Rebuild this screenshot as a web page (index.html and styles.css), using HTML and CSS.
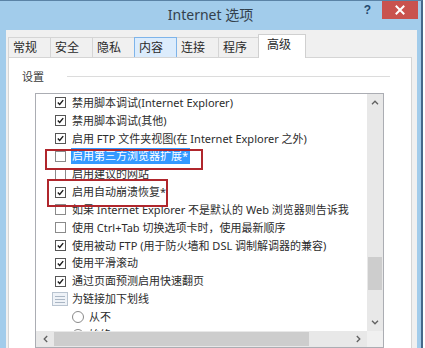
FILE: index.html
```html
<!DOCTYPE html>
<html lang="zh-CN">
<head>
<meta charset="utf-8">
<title>Internet 选项</title>
<link rel="stylesheet" href="styles.css">
</head>
<body>
<div class="window">
  <div class="titlebar">
    <div class="title">Internet 选项</div>
    <div class="controls">
      <span class="help">?</span>
      <span class="close">
        <svg width="10" height="10" viewBox="0 0 10 10"><path d="M1.5 1.5 L8.5 8.5 M8.5 1.5 L1.5 8.5" stroke="#fff" stroke-width="2" stroke-linecap="square"/></svg>
      </span>
    </div>
  </div>
  <div class="body">
    <div class="tabs">
      <div class="tab">常规</div>
      <div class="tab">安全</div>
      <div class="tab">隐私</div>
      <div class="tab hover">内容</div>
      <div class="tab">连接</div>
      <div class="tab">程序</div>
      <div class="tab selected">高级</div>
    </div>
    <div class="panel">
      <div class="group-label"><span>设置</span><div class="rule"></div></div>
      <div class="listbox">
        <div class="list-content">
          <div class="row"><span class="cb on"><svg viewBox="0 0 11 11"><path d="M2.2 5.6 L4.5 8 L8.8 2.6"/></svg></span><span class="txt">禁用脚本调试(Internet Explorer)</span></div>
          <div class="row"><span class="cb on"><svg viewBox="0 0 11 11"><path d="M2.2 5.6 L4.5 8 L8.8 2.6"/></svg></span><span class="txt">禁用脚本调试(其他)</span></div>
          <div class="row"><span class="cb on"><svg viewBox="0 0 11 11"><path d="M2.2 5.6 L4.5 8 L8.8 2.6"/></svg></span><span class="txt">启用 FTP 文件夹视图(在 Internet Explorer 之外)</span></div>
          <div class="row"><span class="cb"></span><span class="txt sel">启用第三方浏览器扩展*</span></div>
          <div class="row"><span class="cb"></span><span class="txt">启用建议的网站</span></div>
          <div class="row"><span class="cb on"><svg viewBox="0 0 11 11"><path d="M2.2 5.6 L4.5 8 L8.8 2.6"/></svg></span><span class="txt">启用自动崩溃恢复*</span></div>
          <div class="row"><span class="cb"></span><span class="txt">如果 Internet Explorer 不是默认的 Web 浏览器则告诉我</span></div>
          <div class="row"><span class="cb"></span><span class="txt">使用 Ctrl+Tab 切换选项卡时，使用最新顺序</span></div>
          <div class="row"><span class="cb on"><svg viewBox="0 0 11 11"><path d="M2.2 5.6 L4.5 8 L8.8 2.6"/></svg></span><span class="txt">使用被动 FTP (用于防火墙和 DSL 调制解调器的兼容)</span></div>
          <div class="row"><span class="cb on"><svg viewBox="0 0 11 11"><path d="M2.2 5.6 L4.5 8 L8.8 2.6"/></svg></span><span class="txt">使用平滑滚动</span></div>
          <div class="row"><span class="cb on"><svg viewBox="0 0 11 11"><path d="M2.2 5.6 L4.5 8 L8.8 2.6"/></svg></span><span class="txt">通过页面预测启用快速翻页</span></div>
          <div class="row grp"><span class="gicon"><svg width="16" height="14" viewBox="0 0 16 14"><rect x="0.5" y="0.5" width="15" height="13" fill="#eef2f7" stroke="#b9c4d0"/><path d="M3 4.5 H13 M3 7.5 H13 M3 10.5 H13" stroke="#aab6c4"/></svg></span><span class="txt">为链接加下划线</span></div>
          <div class="row radio-row"><span class="radio"></span><span class="txt">从不</span></div>
          <div class="row radio-row"><span class="radio"></span><span class="txt">始终</span></div>
          <div class="mark mark1"></div>
          <div class="mark mark2"></div>
        </div>
        <div class="vscroll">
          <div class="sbtn"><svg width="8" height="5" viewBox="0 0 8 5"><path d="M1 4.2 L4 1.2 L7 4.2" fill="none" stroke="#606060" stroke-width="1.3"/></svg></div>
          <div class="vtrack"><div class="vthumb"></div></div>
          <div class="sbtn"><svg width="8" height="5" viewBox="0 0 8 5"><path d="M1 0.8 L4 3.8 L7 0.8" fill="none" stroke="#606060" stroke-width="1.3"/></svg></div>
        </div>
        <div class="hscroll">
          <div class="sbtn"><svg width="5" height="8" viewBox="0 0 5 8"><path d="M4.2 1 L1.2 4 L4.2 7" fill="none" stroke="#606060" stroke-width="1.3"/></svg></div>
          <div class="htrack"><div class="hthumb"></div></div>
          <div class="sbtn"><svg width="5" height="8" viewBox="0 0 5 8"><path d="M0.8 1 L3.8 4 L0.8 7" fill="none" stroke="#606060" stroke-width="1.3"/></svg></div>
        </div>
        <div class="corner"></div>
      </div>
    </div>
  </div>
</div>
</body>
</html>
```
FILE: styles.css
```css
html, body {
  margin: 0;
  padding: 0;
}
body {
  width: 425px;
  height: 348px;
  overflow: hidden;
  background: #ffffff;
  font-family: "Noto Sans", "Noto Sans CJK SC", sans-serif;
  font-size: 11px;
  color: #2c2c2c;
}
.window {
  width: 423px;
  height: 348px;
  box-sizing: border-box;
  background: #a2cceb;
  border-right: 2px solid #47698a;
  border-top: 1px solid #5b83a6;
  display: flex;
  flex-direction: column;
}
.titlebar {
  height: 29px;
  display: grid;
  grid-template-columns: 1fr auto 1fr;
  align-items: start;
}
.title {
  grid-column: 2;
  font-size: 14px;
  line-height: 28px;
  color: #34404c;
}
.controls {
  grid-column: 3;
  justify-self: end;
  display: flex;
  align-items: flex-start;
}
.help {
  font-weight: bold;
  font-size: 12px;
  color: #24496e;
  line-height: 18px;
  margin-right: 11px;
  font-family: "Liberation Sans", sans-serif;
}
.close {
  width: 36px;
  height: 18px;
  background: #c9524e;
  display: flex;
  align-items: center;
  justify-content: center;
  margin-right: 3px;
}
.body {
  flex: 1;
  min-height: 0;
  margin: 0 4px 0 6px;
  background: #f0f0f0;
  padding: 4px 5px 0 2px;
  display: flex;
  flex-direction: column;
  overflow: hidden;
}
.tabs {
  height: 23px;
  display: flex;
  align-items: flex-end;
}
.tab {
  width: 43px;
  height: 20px;
  box-sizing: border-box;
  border: 1px solid #d5d5d5;
  border-bottom: none;
  background: #f0f0f0;
  margin-right: -1px;
  padding-left: 4px;
  font-size: 12px;
  line-height: 19px;
  color: #2a2a2a;
}
.tab.hover {
  background: #dcecfc;
  border-color: #7eb4ea;
  position: relative;
  z-index: 1;
}
.tab.selected {
  width: 48px;
  height: 24px;
  margin-left: -2px;
  margin-bottom: -1px;
  background: #ffffff;
  border-color: #d0d0d0;
  padding-left: 8px;
  line-height: 20px;
  position: relative;
  z-index: 2;
}
.panel {
  flex: 1;
  background: #ffffff;
  border: 1px solid #d5d5d5;
  padding: 0 21px 0 13px;
}
.group-label {
  margin-top: 10px;
  height: 16px;
  display: flex;
  align-items: center;
  color: #3a3a3a;
}
.rule {
  flex: 1;
  height: 1px;
  background: #dcdcdc;
  margin-left: 23px;
}
.listbox {
  margin-top: 9px;
  margin-left: 13px;
  width: 349px;
  height: 255px;
  box-sizing: border-box;
  border: 1px solid #abadb3;
  display: grid;
  grid-template-columns: 1fr 16px;
  grid-template-rows: 1fr 16px;
}
.list-content {
  position: relative;
  overflow: hidden;
  min-height: 0;
}
.row {
  height: 17.83px;
  display: flex;
  align-items: center;
  padding-left: 19px;
  white-space: nowrap;
}
.cb {
  width: 11px;
  height: 11px;
  box-sizing: border-box;
  border: 1px solid #8a8a8a;
  background: #fff;
  margin-right: 6px;
  flex: none;
  display: flex;
}
.cb.on {
  border-color: #555555;
}
.cb svg {
  width: 9px;
  height: 9px;
}
.cb svg path {
  fill: none;
  stroke: #1a1a1a;
  stroke-width: 1.7;
}
.txt {
  line-height: 16px;
}
.txt.sel {
  background: #3399ff;
  color: #fff;
  padding: 0 2px 0 1px;
  margin-left: -1px;
}
.row.grp {
  padding-left: 16px;
}
.gicon {
  width: 16px;
  height: 14px;
  margin-right: 4px;
  display: flex;
}
.row.radio-row {
  padding-left: 36px;
}
.radio {
  width: 12px;
  height: 12px;
  box-sizing: border-box;
  border: 1px solid #8a8a8a;
  border-radius: 50%;
  background: #fff;
  margin-right: 5px;
  flex: none;
}
.mark {
  position: absolute;
  border: 2px solid #b0262c;
  box-sizing: border-box;
}
.mark1 {
  left: 9px;
  top: 55px;
  width: 158px;
  height: 21px;
}
.mark2 {
  left: 11px;
  top: 85px;
  width: 121px;
  height: 28px;
}
.vscroll {
  background: #e8e8e8;
  display: flex;
  flex-direction: column;
}
.sbtn {
  flex: none;
  width: 16px;
  height: 17px;
  display: flex;
  align-items: center;
  justify-content: center;
}
.vtrack {
  flex: 1;
  padding-top: 146px;
}
.vthumb {
  margin: 0 1px;
  height: 33px;
  background: #cdcdcd;
}
.hscroll {
  background: #e8e8e8;
  display: flex;
}
.hscroll .sbtn {
  width: 18px;
  height: 16px;
}
.htrack {
  flex: 1;
  display: flex;
  align-items: stretch;
  padding: 1px 0;
}
.hthumb {
  width: 255px;
  background: #cdcdcd;
}
.corner {
  background: #f0f0f0;
}
```
